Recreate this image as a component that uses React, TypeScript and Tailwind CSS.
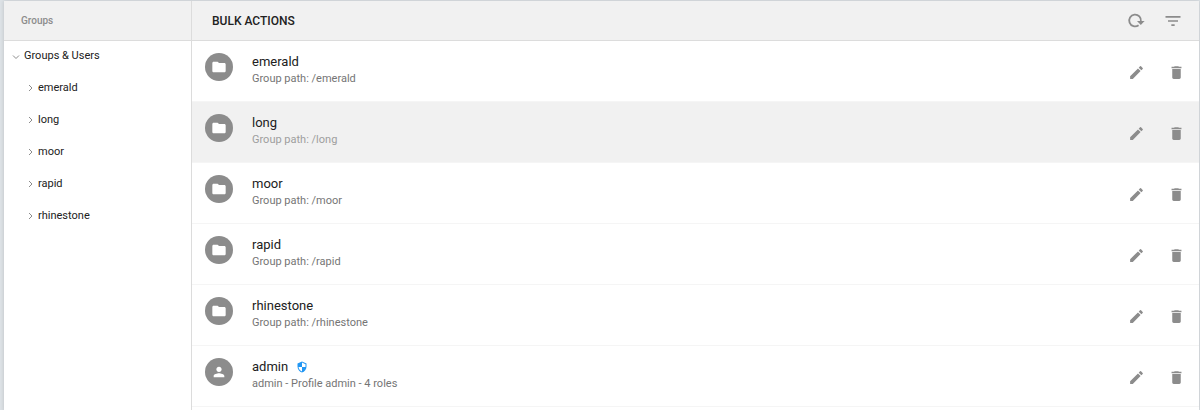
import { clsx } from "clsx";
import { MdDelete, MdFilterList, MdFolder, MdPerson } from "react-icons/md";

interface Principal {
  name: string;
  details: string;
  kind: "group" | "user";
  isAdmin?: boolean;
}

const GROUPS = ["emerald", "long", "moor", "rapid", "rhinestone"];

const PRINCIPALS: Principal[] = [
  ...GROUPS.map((name): Principal => ({ name, details: `Group path: /${name}`, kind: "group" })),
  { name: "admin", details: "admin - Profile admin - 4 roles", kind: "user", isAdmin: true },
];

const HIGHLIGHTED = "long";

function ReloadIcon() {
  return (
    <svg viewBox="0 0 18 18" className="size-[18px]" fill="none" aria-hidden="true">
      <path d="M11.6 13.2A5.9 5.9 0 1 1 13.9 9.4" stroke="currentColor" strokeWidth="1.8" />
      <path d="M10 9.1h7.6L13.8 13z" fill="currentColor" />
    </svg>
  );
}

function PencilIcon() {
  return (
    <svg viewBox="0 0 24 24" className="size-[17px]" fill="currentColor" aria-hidden="true">
      <path d="M3 17.25V21h3.75L17.81 9.94l-3.75-3.75zM20.71 7.04a1 1 0 0 0 0-1.41l-2.34-2.34a1 1 0 0 0-1.41 0l-1.83 1.83 3.75 3.75z" />
    </svg>
  );
}

function ShieldIcon() {
  return (
    <svg viewBox="0 0 24 24" className="size-3 text-[#2196f3]" fill="currentColor" aria-hidden="true">
      <path d="M12 1l9 4v6c0 5.55-3.84 10.74-9 12-5.16-1.26-9-6.45-9-12V5zm0 10.99H5c.53 4.12 3.28 7.79 7 8.94V12h7V6.3l-7-3.11z" />
    </svg>
  );
}

function Chevron({ open = false }: { open?: boolean }) {
  return (
    <svg
      viewBox="0 0 8 8"
      className="size-2 shrink-0 text-[#8c8c8c]"
      fill="none"
      stroke="currentColor"
      aria-hidden="true"
    >
      <path d={open ? "M1 2.5l3 3 3-3" : "M3 1l3 3-3 3"} />
    </svg>
  );
}

function GroupTree() {
  return (
    <aside className="flex w-[188px] shrink-0 flex-col border-r border-[#dcdcdc]">
      <h2 className="flex h-10 items-center border-b border-[#dcdcdc] bg-[#f1f1f1] px-[17px] text-[10px] font-medium text-[#8c8c8c]">
        Groups
      </h2>
      <nav aria-label="Groups" className="text-[11px] text-[#212121]">
        <button type="button" className="flex h-[31px] w-full items-center gap-1 px-2">
          <Chevron open />
          Groups &amp; Users
        </button>
        <ul>
          {GROUPS.map((group) => (
            <li key={group}>
              <button type="button" className="flex h-8 w-full items-center gap-1 pr-2 pl-[22px]">
                <Chevron />
                {group}
              </button>
            </li>
          ))}
        </ul>
      </nav>
    </aside>
  );
}

function PrincipalRow({ principal, active }: { principal: Principal; active: boolean }) {
  const { name, details, kind, isAdmin } = principal;

  return (
    <li
      className={clsx(
        "flex h-[61px] items-center border-b border-[#f5f5f5] pr-[14px] pl-[13px]",
        active && "bg-[#f1f1f1]"
      )}
    >
      <span className="mb-2 flex size-7 shrink-0 items-center justify-center rounded-full bg-[#8c8c8c] text-white">
        {kind === "group" ? <MdFolder className="size-4" /> : <MdPerson className="size-4" />}
      </span>
      <div className="mb-0.5 ml-[19px] min-w-0 flex-1">
        <h3 className="flex items-center gap-2 text-[13px] leading-[18px] text-[#212121]">
          {name}
          {isAdmin && <ShieldIcon />}
        </h3>
        <p
          className={clsx(
            "truncate text-[11px] leading-4",
            active ? "text-[#9e9e9e]" : "text-[#757575]"
          )}
        >
          {details}
        </p>
      </div>
      <div className="mt-0.5 flex gap-[23px] text-[#8c8c8c]">
        <button type="button" aria-label={`Edit ${name}`}>
          <PencilIcon />
        </button>
        <button type="button" aria-label={`Delete ${name}`}>
          <MdDelete className="size-[17px]" />
        </button>
      </div>
    </li>
  );
}

export default function App() {
  return (
    <div className="min-h-screen bg-[#dde2e6] pt-px pr-px pl-1 font-['Roboto',sans-serif]">
      <div className="flex min-h-screen bg-white shadow-[0_0_4px_rgba(0,0,0,0.15)]">
        <GroupTree />
        <main className="min-w-0 flex-1">
          <header className="flex h-10 items-center justify-between border-b border-[#dcdcdc] bg-[#f1f1f1] pr-4 pl-5">
            <button type="button" className="text-xs font-medium text-[#212121]">
              BULK ACTIONS
            </button>
            <div className="flex items-center gap-[18px] text-[#8c8c8c]">
              <button type="button" aria-label="Reload">
                <ReloadIcon />
              </button>
              <button type="button" aria-label="Filter">
                <MdFilterList className="size-5" />
              </button>
            </div>
          </header>
          <ul>
            {PRINCIPALS.map((principal) => (
              <PrincipalRow
                key={principal.name}
                principal={principal}
                active={principal.name === HIGHLIGHTED}
              />
            ))}
          </ul>
        </main>
      </div>
    </div>
  );
}
